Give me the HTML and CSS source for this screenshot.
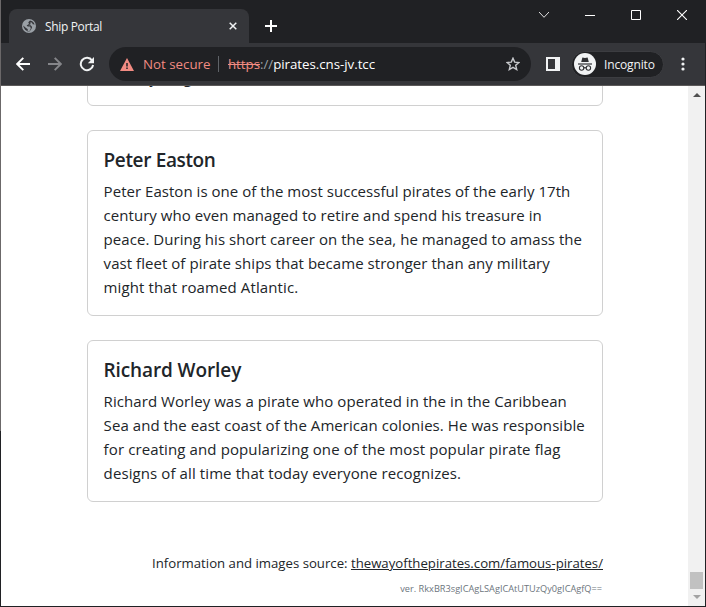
FILE: index.html
```html
<!DOCTYPE html>
<html lang="en">
<head>
<meta charset="utf-8">
<title>Ship Portal</title>
<link rel="stylesheet" href="styles.css">
</head>
<body>
<div class="window">
  <header class="tabbar">
    <div class="tab">
      <svg class="globe" width="14" height="14" viewBox="0 0 14 14"><circle cx="7" cy="7" r="7" fill="#9aa0a6"/><path d="M8 1.4L6.3 3.2 7 5 4.6 6.4l1.2 1.2h2.4l.6 2-1.4 2.7-1.8-.2.2-1.9L3.4 8.6 1.3 6.4 1.5 8l1.6 2.8 2.7 1.6h1.8l1.9-2.6.6-1.8-1.4-1.8H6.4l2.2-1L8.2 3.6l1.7-.2.8 1.8 1.9.4-.8-1.9-1.6-1.5z" fill="#35363a"/></svg>
      <span class="tab-title">Ship Portal</span>
      <svg class="tab-close" width="8" height="8" viewBox="0 0 8 8"><path d="M.7.7l6.6 6.6M7.3.7L.7 7.3" stroke="#f1f3f4" stroke-width="1.5"/></svg>
    </div>
    <svg class="new-tab" width="12" height="12" viewBox="0 0 12 12"><path d="M6 0v12M0 6h12" stroke="#fff" stroke-width="2"/></svg>
    <div class="controls">
      <svg width="10" height="10" viewBox="0 0 10 10"><path d="M0 2l5 5.3L10 2" fill="none" stroke="#e0e0e0"/></svg>
      <svg width="10" height="10" viewBox="0 0 10 10"><path d="M0 5.5h10" stroke="#fff"/></svg>
      <svg width="10" height="10" viewBox="0 0 10 10"><path d="M.5.5h9v9h-9z" fill="none" stroke="#fff"/></svg>
      <svg width="10" height="10" viewBox="0 0 10 10"><path d="M0 0l10 10M10 0L0 10" stroke="#fff" stroke-width="1.1"/></svg>
    </div>
  </header>
  <nav class="toolbar">
    <svg class="back" width="14" height="14" viewBox="0 0 14 14"><path d="M14 7H1.5M7.3.9L1.2 7l6.1 6.1" fill="none" stroke="#fff" stroke-width="1.9"/></svg>
    <svg class="forward" width="14" height="14" viewBox="0 0 14 14"><path d="M0 7h12.5M6.7.9L12.8 7l-6.1 6.1" fill="none" stroke="#85868a" stroke-width="1.9"/></svg>
    <svg class="reload" width="16" height="16" viewBox="0 0 16 16"><path d="M13.1 4.5A6.2 6.2 0 1 0 14.1 9" fill="none" stroke="#f1f3f4" stroke-width="2"/><path d="M15 1v6.3H8.8z" fill="#f1f3f4"/></svg>
    <div class="address">
      <svg class="warn" width="14" height="13" viewBox="0 0 14 13"><path d="M7 0l7 13H0z" fill="#f28b82"/><path d="M7 5v3.5M7 9.5V11" stroke="#202124" stroke-width="1.5"/></svg>
      <span class="not-secure">Not secure</span>
      <span class="divider"></span>
      <span class="url"><span class="scheme">https</span><span class="slashes">://</span>pirates.cns-jv.tcc</span>
      <svg class="star" width="14" height="14" viewBox="0 0 14 14"><path d="M7 1.2l1.7 3.9 4.2.4-3.2 2.8 1 4.2L7 10.3l-3.7 2.2 1-4.2L1.1 5.5l4.2-.4z" fill="none" stroke="#c8cacd" stroke-width="1.4"/></svg>
    </div>
    <svg class="panel" width="14" height="14" viewBox="0 0 14 14"><path d="M0 0h14v14H0zM2 2v10h7V2z" fill="#f1f3f4" fill-rule="evenodd"/></svg>
    <div class="profile">
      <svg width="22" height="22" viewBox="0 0 22 22"><circle cx="11" cy="11" r="11" fill="#f1f3f4"/><path d="M7.2 9L8.4 4.4l2.6.5 2.6-.5L14.8 9z" fill="#303134"/><path d="M4 11h14" stroke="#303134" stroke-width="1.2"/><g fill="none" stroke="#303134" stroke-width="1.1"><circle cx="7.6" cy="15" r="2.2"/><circle cx="14.4" cy="15" r="2.2"/><path d="M9.8 15q1.2-.8 2.4 0"/></g></svg>
      <span class="profile-name">Incognito</span>
    </div>
    <svg class="menu" width="4" height="14" viewBox="0 0 4 14"><g fill="#f1f3f4"><circle cx="2" cy="2" r="1.6"/><circle cx="2" cy="7" r="1.6"/><circle cx="2" cy="12" r="1.6"/></g></svg>
  </nav>
  <div class="viewport">
    <main class="page">
      <article class="card previous"><p><span class="line tail">y</span><span class="line">g</span></p></article>
      <article class="card">
        <h5 class="t1">Peter Easton</h5>
        <p>
          <span class="line a1">Peter Easton is one of the most successful pirates of the early 17th</span><br>
          <span class="line a2">century who even managed to retire and spend his treasure in</span><br>
          <span class="line a3">peace. During his short career on the sea, he managed to amass the</span><br>
          <span class="line a4">vast fleet of pirate ships that became stronger than any military</span><br>
          <span class="line a5">might that roamed Atlantic.</span>
        </p>
      </article>
      <article class="card">
        <h5 class="t2">Richard Worley</h5>
        <p>
          <span class="line b1">Richard Worley was a pirate who operated in the in the Caribbean</span><br>
          <span class="line b2">Sea and the east coast of the American colonies. He was responsible</span><br>
          <span class="line b3">for creating and popularizing one of the most popular pirate flag</span><br>
          <span class="line b4">designs of all time that today everyone recognizes.</span>
        </p>
      </article>
      <footer>
        <div class="source">Information and images source: <a>thewayofthepirates.com/famous-pirates/</a></div>
        <div class="version">ver. RkxBR3sgICAgLSAgICAtUTUzQy0gICAgfQ==</div>
      </footer>
    </main>
    <aside class="scrollbar">
      <svg class="arrow-up" width="8" height="4" viewBox="0 0 8 4"><path d="M0 4l4-4 4 4z" fill="#505050"/></svg>
      <span class="thumb"></span>
      <svg class="arrow-down" width="8" height="4" viewBox="0 0 8 4"><path d="M0 0l4 4 4-4z" fill="#a3a3a3"/></svg>
    </aside>
  </div>
</div>
</body>
</html>
```
FILE: styles.css
```css
* { box-sizing: border-box; }
body { margin: 0; font-family: "Open Sans", "Noto Sans", sans-serif; }
svg { display: block; flex: none; }
.window { width: 706px; height: 607px; overflow: hidden; display: flex; flex-direction: column; padding: 0 1px 1px; background: linear-gradient(#6b6869 431px, #202124 431px) 0 0 / 1px 100% no-repeat #202124; }
.tabbar { height: 43px; flex: none; display: flex; background: #202124; padding: 9px 0 0 8px; }
.tab { width: 240px; height: 34px; background: #35363a; border-radius: 8px 8px 0 0; display: flex; align-items: center; padding: 0 12px 0 13px; }
.tab-title { color: #f1f3f4; font-size: 12px; margin-left: 9px; flex: 1; white-space: nowrap; letter-spacing: -.35px; }
.new-tab { margin: 11px 0 0 16px; }
.controls { margin: 1px 18px 0 auto; display: flex; gap: 36px; }
.toolbar { height: 43px; flex: none; display: flex; align-items: center; background: #35363a; border-bottom: 1px solid #5b5959; }
.back { margin-left: 15px; }
.forward { margin-left: 18px; }
.reload { margin-left: 17px; }
.address { width: 422px; height: 34px; margin-left: 14px; border-radius: 17px; background: #202124; display: flex; align-items: center; padding: 0 11px; font-size: 13.3px; white-space: nowrap; }
.not-secure { color: #f28b82; margin-left: 9px; width: 67px; }
.divider { width: 1px; height: 16px; background: #5f6368; margin: 0 9px 0 8px; }
.url { color: #fff; letter-spacing: -.03px; }
.scheme { color: #f28b82; text-decoration: line-through; }
.slashes { color: #9aa0a6; }
.star { margin-left: auto; }
.panel { margin-left: 15px; }
.profile { width: 93px; height: 27px; margin-left: 11px; border-radius: 14px; border: 1px solid #3c3d41; background: #202124; display: flex; align-items: center; padding-left: 2px; }
.profile-name { color: #f1f3f4; font-size: 12px; margin-left: 8px; letter-spacing: -.15px; }
.menu { margin-left: 17px; }
.viewport { height: 520px; display: flex; overflow: hidden; background: #fff; }
.page { width: 687px; padding-left: 86px; height: 520px; color: #212529; }
.card { width: 516px; border: 1px solid #d0d0d0; border-radius: 6px; padding: 16px; margin-bottom: 24px; }
.card h5 { margin: 0 0 8px -.5px; font-size: 19px; line-height: 26px; height: 24px; font-weight: 600; white-space: nowrap; }
.card .t1 { letter-spacing: -.35px; }
.card .t2 { letter-spacing: -.1px; }
.card p { margin: 0 0 0 -.4px; font-size: 15px; line-height: 24px; white-space: nowrap; }
.previous { margin-top: -38px; height: 58px; padding-left: 62px; }
.line { display: inline-block; }
.tail { width: 34px; }
.a1 { letter-spacing: .035px; }
.a2 { letter-spacing: .045px; }
.a3 { letter-spacing: .045px; }
.a4 { letter-spacing: .05px; }
.a5 { letter-spacing: .11px; }
.b1 { letter-spacing: .065px; }
.b2 { letter-spacing: .065px; }
.b3 { letter-spacing: .11px; }
.b4 { letter-spacing: .1px; }
footer { width: 516px; text-align: right; padding-top: 26px; white-space: nowrap; }
.source { font-size: 13.2px; line-height: 22px; }
.source a { text-decoration: underline; }
.version { font-size: 9.2px; line-height: 14px; margin-top: 8px; padding-right: 1px; color: #6c757d; }
.scrollbar { width: 17px; background: #f1f1f1; display: flex; flex-direction: column; align-items: center; }
.arrow-up { margin-top: 7px; }
.thumb { width: 13px; height: 17px; background: #c1c1c1; margin-top: auto; }
.arrow-down { margin: 6px 0 7px; }
```
